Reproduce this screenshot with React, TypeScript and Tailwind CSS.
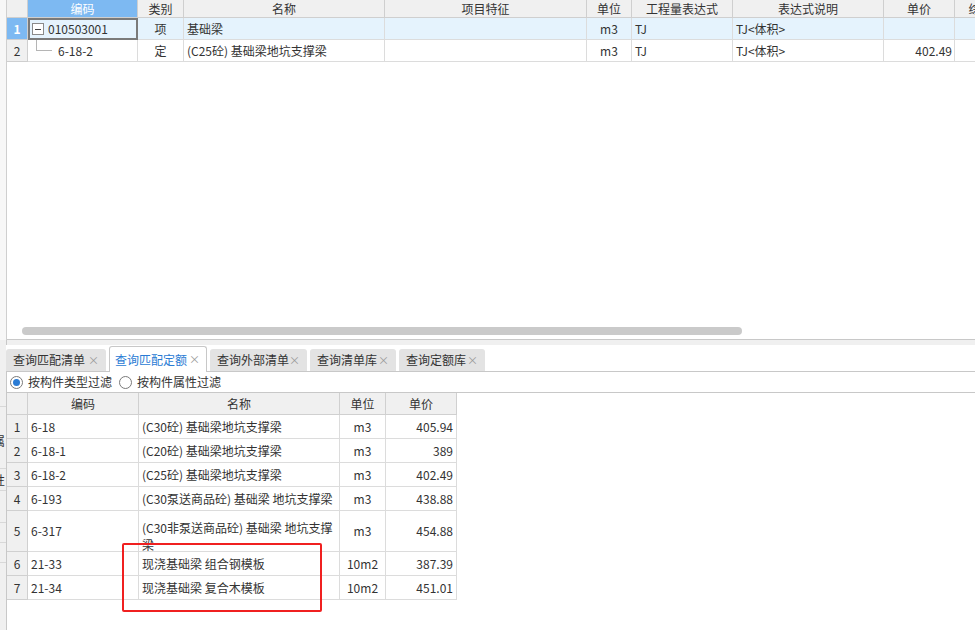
import React from "react";

const F = { fontFamily: '"Noto Sans CJK SC", "Microsoft YaHei", sans-serif' };

function TopHeader() {
  const cols: [string, string, boolean?][] = [
    ["", "w-[21px]"],
    ["编码", "w-[110px]", true],
    ["类别", "w-[46px]"],
    ["名称", "w-[201px]"],
    ["项目特征", "w-[202px]"],
    ["单位", "w-[45px]"],
    ["工程量表达式", "w-[101px]"],
    ["表达式说明", "w-[151px]"],
    ["单价", "w-[71px]"],
    ["综", "w-[40px]"],
  ];
  return (
    <div className="flex h-[18px] shrink-0">
      {cols.map(([t, w, sel], i) => (
        <div
          key={i}
          className={`${w} shrink-0 h-full flex items-center justify-center border-r border-b border-[#cfcfcf] text-[12px] leading-none ${
            sel ? "bg-[#7db9f2] text-white" : "bg-[#f0f0f0] text-[#333]"
          }`}
        >
          {t}
        </div>
      ))}
    </div>
  );
}

function TopRows() {
  return (
    <>
      <div className="flex h-[22px] shrink-0 bg-[#e5f3fd] text-[12px] text-[#333]">
        <div className="w-[21px] shrink-0 bg-[#7db9f2] text-white flex items-center justify-center border-r border-b border-[#cfcfcf] font-bold">1</div>
        <div className="w-[110px] shrink-0 border-2 border-[#7a7a7a] flex items-center pl-[2px] bg-[#e5f3fd]">
          <div className="w-[12px] h-[12px] border border-[#8a8a8a] flex items-center justify-center bg-white">
            <div className="w-[6px] h-px bg-[#444]" />
          </div>
          <span className="ml-[4px]">010503001</span>
        </div>
        <div className="w-[46px] shrink-0 flex items-center justify-center border-r border-b border-[#dcdcdc]">项</div>
        <div className="w-[201px] shrink-0 flex items-center pl-[3px] border-r border-b border-[#dcdcdc]">基础梁</div>
        <div className="w-[202px] shrink-0 border-r border-b border-[#dcdcdc]" />
        <div className="w-[45px] shrink-0 flex items-center justify-center border-r border-b border-[#dcdcdc]">m3</div>
        <div className="w-[101px] shrink-0 flex items-center pl-[3px] border-r border-b border-[#dcdcdc]">TJ</div>
        <div className="w-[151px] shrink-0 flex items-center pl-[3px] border-r border-b border-[#dcdcdc]">TJ&lt;体积&gt;</div>
        <div className="w-[71px] shrink-0 border-r border-b border-[#dcdcdc]" />
        <div className="w-[40px] shrink-0 border-b border-[#dcdcdc]" />
      </div>
      <div className="flex h-[22px] shrink-0 bg-white text-[12px] text-[#333]">
        <div className="w-[21px] shrink-0 bg-[#f0f0f0] flex items-center justify-center border-r border-b border-[#cfcfcf]">2</div>
        <div className="w-[110px] shrink-0 relative flex items-center border-r border-b border-[#dcdcdc]">
          <div className="absolute left-[8px] top-0 w-px h-[10px] bg-[#b5b5b5]" />
          <div className="absolute left-[8px] top-[10px] w-[16px] h-px bg-[#b5b5b5]" />
          <span className="ml-[30px]">6-18-2</span>
        </div>
        <div className="w-[46px] shrink-0 flex items-center justify-center border-r border-b border-[#dcdcdc]">定</div>
        <div className="w-[201px] shrink-0 flex items-center pl-[3px] border-r border-b border-[#dcdcdc]">(C25砼) 基础梁地坑支撑梁</div>
        <div className="w-[202px] shrink-0 border-r border-b border-[#dcdcdc]" />
        <div className="w-[45px] shrink-0 flex items-center justify-center border-r border-b border-[#dcdcdc]">m3</div>
        <div className="w-[101px] shrink-0 flex items-center pl-[3px] border-r border-b border-[#dcdcdc]">TJ</div>
        <div className="w-[151px] shrink-0 flex items-center pl-[3px] border-r border-b border-[#dcdcdc]">TJ&lt;体积&gt;</div>
        <div className="w-[71px] shrink-0 flex items-center justify-end pr-[2px] border-r border-b border-[#dcdcdc]">402.49</div>
        <div className="w-[40px] shrink-0 border-b border-[#dcdcdc]" />
      </div>
    </>
  );
}

function Tab({ label, w, active }: { label: string; w: string; active?: boolean }) {
  return (
    <div
      className={`${w} flex items-center justify-between shrink-0 rounded-t-[3px] text-[12px] ${
        active
          ? "h-[26px] bg-white border border-b-0 border-[#c8c8c8] text-[#2a7bd4] pl-[5px] pr-[6px] mb-[-1px] relative z-10"
          : "h-[22px] bg-[#e3e3e3] text-[#333] pl-[7px] pr-[7px]"
      }`}
    >
      <span>{label}</span>
      <span className="text-[11px] text-[#9a9a9a]">×</span>
    </div>
  );
}

type Row = { n: string; code: string; name: React.ReactNode; unit: string; price: string; h: string };
const rows: Row[] = [
  { n: "1", code: "6-18", name: "(C30砼) 基础梁地坑支撑梁", unit: "m3", price: "405.94", h: "h-[24px]" },
  { n: "2", code: "6-18-1", name: "(C20砼) 基础梁地坑支撑梁", unit: "m3", price: "389", h: "h-[24px]" },
  { n: "3", code: "6-18-2", name: "(C25砼) 基础梁地坑支撑梁", unit: "m3", price: "402.49", h: "h-[24px]" },
  { n: "4", code: "6-193", name: "(C30泵送商品砼) 基础梁 地坑支撑梁", unit: "m3", price: "438.88", h: "h-[24px]" },
  { n: "5", code: "6-317", name: "(C30非泵送商品砼) 基础梁 地坑支撑梁", unit: "m3", price: "454.88", h: "h-[41px]" },
  { n: "6", code: "21-33", name: "现浇基础梁 组合钢模板", unit: "10m2", price: "387.39", h: "h-[24px]" },
  { n: "7", code: "21-34", name: "现浇基础梁 复合木模板", unit: "10m2", price: "451.01", h: "h-[24px]" },
];

export default function App() {
  return (
    <div className="w-[975px] h-[630px] relative bg-white overflow-hidden flex text-[#333]" style={F}>
      {/* left strip */}
      <div className="w-[7px] shrink-0 flex flex-col">
        <div className="h-[340px] bg-[#f7f7f7] border-r border-[#cfcfcf]" />
        <div className="flex-1 bg-[#f0f0f0] border-r border-[#c8c8c8] flex flex-col">
          <div className="h-[67px] border-b border-[#d8d8d8]" />
          <div className="h-[23px]" />
          <div className="h-[22px] text-[12px] overflow-hidden leading-[22px] text-[#333]"><span className="ml-[-7px]">属</span></div>
          <div className="h-[17px] border-b border-[#d8d8d8]" />
          <div className="h-[22px] text-[12px] overflow-hidden leading-[22px] text-[#333] border-b border-[#d8d8d8]"><span className="ml-[-7px]">性</span></div>
          <div className="h-[32px] border-b border-[#d8d8d8]" />
          <div className="h-[20px] border-b border-[#d8d8d8]" />
          <div className="h-[20px] border-b border-[#d8d8d8]" />
        </div>
      </div>

      <div className="flex-1 flex flex-col min-w-0">
        {/* top panel */}
        <div className="h-[340px] shrink-0 flex flex-col border-b border-[#c8c8c8] overflow-hidden">
          <div className="w-[1000px] flex flex-col">
            <TopHeader />
            <TopRows />
          </div>
          <div className="flex-1" />
          <div className="h-[8px] ml-[15px] w-[720px] rounded-full bg-[#cacaca] mb-[4px]" />
        </div>

        {/* tab strip */}
        <div className="h-[32px] shrink-0 flex flex-col border-b border-[#c8c8c8]">
          <div className="h-[5px] bg-[#f0f0f0]" />
          <div className="flex-1 flex items-end gap-[3px] ml-[-1px] bg-white">
            <Tab label="查询匹配清单" w="w-[100px]" />
            <Tab label="查询匹配定额" w="w-[98px]" active />
            <Tab label="查询外部清单" w="w-[97px]" />
            <Tab label="查询清单库" w="w-[86px]" />
            <Tab label="查询定额库" w="w-[86px]" />
          </div>
        </div>

        {/* radio row */}
        <div className="h-[21px] shrink-0 flex items-center text-[12px] border-b border-[#c8c8c8] bg-white">
          <div className="ml-[3px] w-[13px] h-[13px] rounded-full border border-[#7a7a7a] flex items-center justify-center bg-white">
            <div className="w-[7px] h-[7px] rounded-full bg-[#2a7bd4]" />
          </div>
          <span className="ml-[5px]">按构件类型过滤</span>
          <div className="ml-[7px] w-[13px] h-[13px] rounded-full border border-[#7a7a7a] bg-white" />
          <span className="ml-[5px]">按构件属性过滤</span>
        </div>

        {/* bottom grid */}
        <div className="flex-1 flex flex-col text-[12px]">
          <div className="flex h-[22px] shrink-0">
            <div className="w-[21px] shrink-0 bg-[#f0f0f0] border-r border-b border-[#d0d0d0]" />
            <div className="w-[111px] shrink-0 bg-[#f0f0f0] border-r border-b border-[#d0d0d0] flex items-center justify-center">编码</div>
            <div className="w-[201px] shrink-0 bg-[#f0f0f0] border-r border-b border-[#d0d0d0] flex items-center justify-center">名称</div>
            <div className="w-[46px] shrink-0 bg-[#f0f0f0] border-r border-b border-[#d0d0d0] flex items-center justify-center">单位</div>
            <div className="w-[71px] shrink-0 bg-[#f0f0f0] border-r border-b border-[#d0d0d0] flex items-center justify-center">单价</div>
          </div>
          {rows.map((r) => (
            <div key={r.n} className={`flex ${r.h} shrink-0`}>
              <div className="w-[21px] shrink-0 bg-[#f0f0f0] border-r border-b border-[#d0d0d0] flex items-center justify-center">{r.n}</div>
              <div className="w-[111px] shrink-0 border-r border-b border-[#dcdcdc] flex items-center pl-[3px]">{r.code}</div>
              <div className="w-[201px] shrink-0 border-r border-b border-[#dcdcdc] flex items-center pl-[3px] pr-[2px] leading-[17px] overflow-hidden">
                <span className={r.n === "5" ? "mt-[9px]" : ""}>{r.name}</span>
              </div>
              <div className="w-[46px] shrink-0 border-r border-b border-[#dcdcdc] flex items-center justify-center">{r.unit}</div>
              <div className="w-[71px] shrink-0 border-r border-b border-[#dcdcdc] flex items-center justify-end pr-[3px]">{r.price}</div>
            </div>
          ))}
        </div>
      </div>

      {/* red annotation box */}
      <div className="absolute left-[122px] top-[543px] w-[200px] h-[69px] border-2 border-[#f02020] rounded-[2px] pointer-events-none" />
    </div>
  );
}
